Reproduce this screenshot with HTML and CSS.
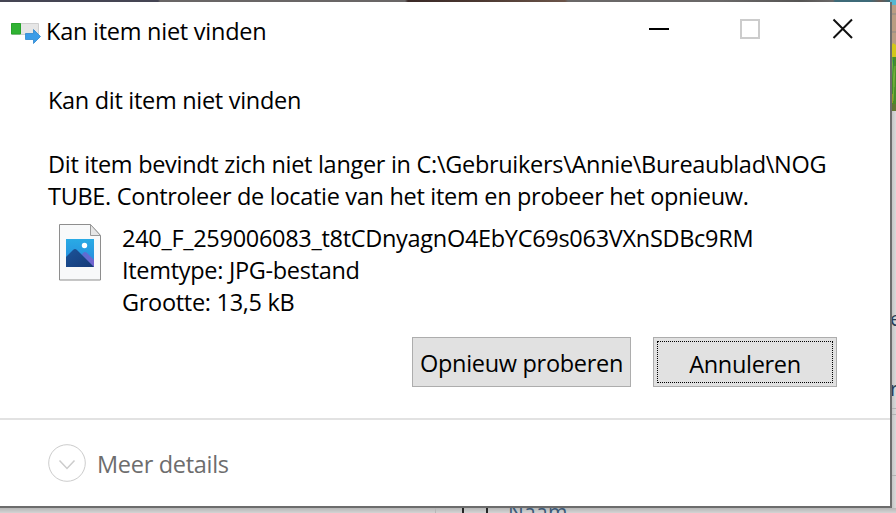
FILE: index.html
```html
<!DOCTYPE html>
<html lang="nl">
<head>
<meta charset="utf-8">
<title>Kan item niet vinden</title>
<link rel="stylesheet" href="styles.css">
</head>
<body>
<div class="desktop">
  <div class="wallpaper-top"></div>
  <svg class="side-picture" width="6" height="111" viewBox="0 0 6 111">
    <rect width="6" height="111" fill="#b99c82"/>
    <rect width="6" height="5" fill="#54b7d2"/>
    <path d="M0 14h6M0 32h6" stroke="#8b8987"/>
    <path d="M0 48l3-5 3 2v16l-6 5z" fill="#d3c719"/>
    <rect y="57" width="6" height="54" fill="#498c28"/>
    <path d="M0 60h4l-3 27H0z" fill="#23825b"/>
    <path d="M2 57l2 30M5 66l-2 35" stroke="#75b43c"/>
    <path d="M0 94h3v9H0z" fill="#96982a"/>
    <rect y="104" width="6" height="7" fill="#637733"/>
  </svg>
  <div class="shade-right"></div>
  <span class="behind behind-one">e</span>
  <span class="behind behind-two">r</span>
  <div class="rule rule-one"></div>
  <div class="rule rule-two"></div>
  <div class="rule rule-three"></div>
  <div class="shade-bottom"><i class="column-line"></i><i class="check"></i><span class="column">Naam</span></div>

  <main class="dialog">
    <header class="titlebar">
      <svg class="app-icon" width="30" height="22" viewBox="0 0 30 22">
        <path d="M.5.5h27v11H.5z" fill="#e6e6e6" stroke="#cfcfcf"/>
        <path d="M.5.5h9v10.500h-9z" fill="#30b233" stroke="#27a42b"/>
        <path d="M14.500 10.500h8V6.500l7 7-7 7v-4h-8z" fill="#3b9ce7" stroke="#2c86cf" stroke-width=".8"/>
      </svg>
      <h1 class="title">Kan item niet vinden</h1>
      <svg class="controls" width="206" height="22" viewBox="0 0 206 22">
        <path d="M0 11h20" stroke="#000" stroke-width="2"/>
        <path d="M92 2h18v18H92z" fill="none" stroke="#ccc" stroke-width="2"/>
        <path d="M184.500 1.500l18.500 18.500M203 1.500L184.500 20" stroke="#111" stroke-width="2"/>
      </svg>
    </header>
    <section class="content">
      <p class="line heading">Kan dit item niet vinden</p>
      <p class="line path">Dit item bevindt zich niet langer in C:\Gebruikers\Annie\Bureaublad\NOG</p>
      <p class="line advice">TUBE. Controleer de locatie van het item en probeer het opnieuw.</p>
      <div class="item">
        <svg class="file-icon" width="43" height="57" viewBox="0 0 43 57">
          <defs>
            <linearGradient id="sky" x1="0" y1="0" x2="0" y2="1"><stop stop-color="#29abe5"/><stop offset="1" stop-color="#2585db"/></linearGradient>
            <linearGradient id="hill" x1="0" y1="0" x2="1" y2="1"><stop stop-color="#1b5499"/><stop offset="1" stop-color="#163a78"/></linearGradient>
            <linearGradient id="far" x1="0" y1="0" x2="1" y2="0"><stop stop-color="#4b74d4"/><stop offset="1" stop-color="#7464cf"/></linearGradient>
          </defs>
          <path d="M.5.5h31l10 11v44.500H.5z" fill="#f8f9fa" stroke="#8e8e8e"/>
          <path d="M31.500.5v11h10z" fill="#e6e6e6" stroke="#999"/>
          <path d="M7 15h28v28H7z" fill="url(#sky)"/>
          <path d="M18 36l6-7q2-2 4 0l7 7v7H18z" fill="url(#far)"/>
          <path d="M7 33l7-7q2-2 4 0l17 17H7z" fill="url(#hill)"/>
          <circle cx="25.500" cy="21.500" r="2.700" fill="#fff"/>
        </svg>
        <div>
          <p class="line filename">240_F_259006083_t8tCDnyagnO4EbYC69s063VXnSDBc9RM</p>
          <p class="line type">Itemtype: JPG-bestand</p>
          <p class="line size">Grootte: 13,5 kB</p>
        </div>
      </div>
      <div class="actions">
        <button class="button retry"><span>Opnieuw proberen</span></button>
        <button class="button cancel"><span>Annuleren</span></button>
      </div>
    </section>
    <footer class="footer">
      <svg width="38" height="38" viewBox="0 0 38 38" fill="none">
        <circle cx="19" cy="19" r="18.300" stroke="#ccc"/>
        <path d="M11.500 16.500l7.500 8 7.500-8" stroke="#ccc" stroke-width="1.500"/>
      </svg>
      <span class="line more">Meer details</span>
    </footer>
  </main>
</div>
</body>
</html>
```
FILE: styles.css
```css
* { box-sizing: border-box; }
body { margin: 0; overflow: hidden; }
h1, p { margin: 0; font-weight: 400; }

.desktop {
  position: relative;
  width: 896px;
  height: 513px;
  overflow: hidden;
  background: #d4d4d4;
  font-family: "Open Sans", "Noto Sans", sans-serif;
  font-size: 23.5px;
  color: #000;
}
.wallpaper-top {
  position: absolute;
  inset: 0 0 auto 0;
  height: 2px;
  background: linear-gradient(90deg, #454553 0 158px, #696666 160px 405px, #3a2927 408px, #4b3831 480px, #6b5449 565px, #6a6868 568px 720px, #565554 800px, #6a6868 833px, #3e6a78 835px 870px, #6c5953 880px, #356a78 891px);
}
.side-picture { position: absolute; left: 890px; top: 0; }
.shade-right { position: absolute; left: 892px; top: 111px; width: 4px; height: 402px; background: linear-gradient(90deg, #c5c5c5, #d9d9d9); }
.behind { position: absolute; left: 890px; font-size: 20px; line-height: 24px; color: #293c55; }
.behind-one { top: 307px; }
.behind-two { top: 377px; }
.rule { position: absolute; left: 892px; width: 4px; height: 1px; background: #b2b2b2; }
.rule-one { top: 408px; }
.rule-two { top: 414px; }
.rule-three { top: 475px; }
.shade-bottom { position: absolute; left: 0; top: 508px; width: 896px; height: 5px; overflow: hidden; background: linear-gradient(#b6b6b6, #d4d4d4); }
.column-line { position: absolute; left: 435px; top: 0; width: 1px; height: 5px; background: #b6b6b6; }
.check { position: absolute; left: 462px; top: -8px; width: 26px; height: 26px; border: 2px solid #252525; }
.column { position: absolute; left: 508px; top: -8px; font-size: 21px; line-height: 24px; letter-spacing: .3px; color: #3c5877; }

.dialog {
  position: absolute;
  left: 0;
  top: 2px;
  width: 892px;
  height: 506px;
  border: solid #6c6c6c;
  border-width: 0 2px 2px 0;
  background: #fff;
}
.titlebar { display: flex; height: 58px; padding-left: 11px; }
.app-icon { margin-top: 21px; }
.title { width: 608px; margin-left: 5px; padding-top: 13px; font-size: 23.5px; line-height: 32px; white-space: nowrap; letter-spacing: -.25px; }
.controls { margin: 16px 0 0 -5px; }
.content { height: 358px; padding: 24px 53px 0 48px; }
.line { line-height: 32px; white-space: nowrap; letter-spacing: -.3px; }
.heading { margin-bottom: 32px; }
.item { display: flex; gap: 20px; margin: 10px 0 0 11px; }
.file-icon { margin-top: 2px; }
.item .line { letter-spacing: -.3px; }
.actions { display: flex; justify-content: flex-end; gap: 22px; margin-top: 19px; }
.button {
  height: 50px;
  padding: 0;
  border: 1px solid #adadad;
  border-radius: 0;
  background: #e1e1e1;
  color: #000;
  font: inherit;
  letter-spacing: -.3px;
  white-space: nowrap;
}
.button span { display: block; line-height: 42px; padding-top: 2px; }
.retry { width: 219px; }
.cancel { width: 184px; padding: 3px; }
.cancel span { border: 1px dotted #000; height: 42px; line-height: 40px; }
.footer { display: flex; align-items: center; gap: 11px; height: 88px; padding-left: 48px; border-top: 2px solid #e2e2e2; color: #6d6d6d; }
.more { padding-top: 2px; }
```
